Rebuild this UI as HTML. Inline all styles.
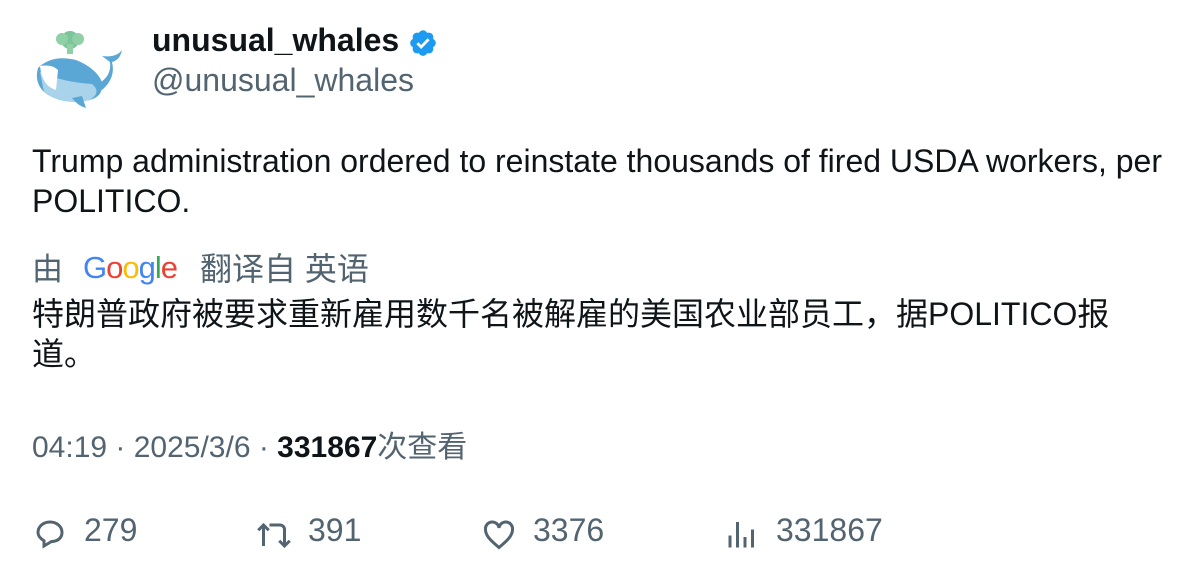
<!DOCTYPE html>
<html><head><meta charset="utf-8"><style>
body{margin:0;width:1196px;height:578px;background:#fff;font-family:"Liberation Sans","Noto Sans CJK SC",sans-serif;color:#0f1419;position:relative;overflow:hidden}
.a{position:absolute;white-space:nowrap}
.g{color:#536471}
</style></head><body>
<svg class="a" style="left:32px;top:26px" width="94" height="84" viewBox="0 0 94 84">
<circle cx="38" cy="14" r="9" fill="#7cc49a"/><circle cx="30" cy="13" r="6" fill="#8fd0a6"/><circle cx="46" cy="13" r="6" fill="#8fd0a6"/><rect x="35" y="18" width="6" height="10" fill="#8fd0a6"/>
<path d="M6 42 Q20 28 44 34 Q64 42 70 56 Q72 70 58 74 Q30 80 12 66 Q2 56 6 42Z" fill="#5aa7d6"/>
<path d="M8 46 Q30 56 60 58 Q70 66 58 74 Q30 80 12 66 Z" fill="#a9d3ea"/>
<path d="M8 40 Q20 38 26 44 L24 64 Q10 60 8 40Z" fill="#fff"/>
<path d="M66 58 Q80 50 78 36 L70 30 Q84 32 90 24 Q88 34 80 36 Q84 52 70 64Z" fill="#5aa7d6"/>
<path d="M40 72 Q46 80 54 82 L50 70Z" fill="#5aa7d6"/>
</svg>
<div class="a" style="left:152px;top:22px;font-size:32px;font-weight:bold">unusual_whales</div>
<svg class="a" style="left:408px;top:28px" width="30" height="30" viewBox="0 0 24 24"><path fill="#1d9bf0" d="M22.25 12c0-1.43-.88-2.67-2.19-3.34.46-1.39.2-2.9-.81-3.91s-2.520-1.27-3.910-.81c-.66-1.31-1.91-2.19-3.340-2.19s-2.67.88-3.33 2.19c-1.4-.46-2.91-.2-3.92.81s-1.26 2.52-.8 3.91C2.63 9.330 1.75 10.57 1.75 12s.88 2.67 2.19 3.34c-.46 1.39-.21 2.9.8 3.91s2.52 1.26 3.91.81c.67 1.31 1.91 2.19 3.34 2.19s2.68-.88 3.34-2.19c1.39.45 2.9.2 3.91-.81s1.27-2.52.81-3.91c1.31-.67 2.19-1.91 2.19-3.34z"/><path d="M7.5 12.2l3 3 6-6.2" stroke="#fff" stroke-width="2.2" fill="none"/></svg>
<div class="a g" style="left:152px;top:62px;font-size:32px">@unusual_whales</div>
<div class="a" style="left:32px;top:141px;font-size:32px;line-height:40px;white-space:normal;width:1140px">Trump administration ordered to reinstate thousands of fired USDA workers, per POLITICO.</div>
<div class="a g" style="left:32px;top:244px;font-size:31px">由</div>
<div class="a" style="left:83px;top:250px;font-size:31px;letter-spacing:-1px"><span style="color:#4285f4">G</span><span style="color:#ea4335">o</span><span style="color:#fbbc05">o</span><span style="color:#4285f4">g</span><span style="color:#34a853">l</span><span style="color:#ea4335">e</span></div>
<div class="a g" style="left:200px;top:244px;font-size:32px">翻译自 英语</div>
<div class="a" style="left:32px;top:294px;font-size:32px;line-height:40px;white-space:normal;width:1100px">特朗普政府被要求重新雇用数千名被解雇的美国农业部员工，据POLITICO报道。</div>
<div class="a g" style="left:32px;top:422px;font-size:30px">04:19 · 2025/3/6 · <b style="color:#0f1419">331867</b>次查看</div>
<svg class="a" style="left:32px;top:516px" width="36" height="36" viewBox="0 0 24 24" fill="none" stroke="#536471" stroke-width="2"><path d="M4 11c0-4 3.5-7 8-7s8 3 8 7-3.5 6-7 6l-5 3v-3.5C5.5 15 4 13 4 11z"/></svg>
<div class="a g" style="left:84px;top:512px;font-size:32px">279</div>
<svg class="a" style="left:256px;top:516px" width="36" height="36" viewBox="0 0 24 24" fill="none" stroke="#536471" stroke-width="2"><path d="M5 20V6M1.5 9.5L5 6l3.5 3.5M9 6h7a3 3 0 0 1 3 3v11M15.5 16.5L19 20l3.5-3.5"/></svg>
<div class="a g" style="left:308px;top:512px;font-size:32px">391</div>
<svg class="a" style="left:481px;top:516px" width="36" height="36" viewBox="0 0 24 24" fill="none" stroke="#536471" stroke-width="2"><path d="M12 21C6 16 3 13 3 9a4.5 4.5 0 0 1 9-1 4.5 4.5 0 0 1 9 1c0 4-3 7-9 12z"/></svg>
<div class="a g" style="left:533px;top:512px;font-size:32px">3376</div>
<svg class="a" style="left:724px;top:516px" width="36" height="36" viewBox="0 0 24 24" fill="none" stroke="#536471" stroke-width="2"><path d="M4 21v-8M9 21V4M14 21v-7M19 21V9"/></svg>
<div class="a g" style="left:776px;top:512px;font-size:32px">331867</div>
</body></html>
